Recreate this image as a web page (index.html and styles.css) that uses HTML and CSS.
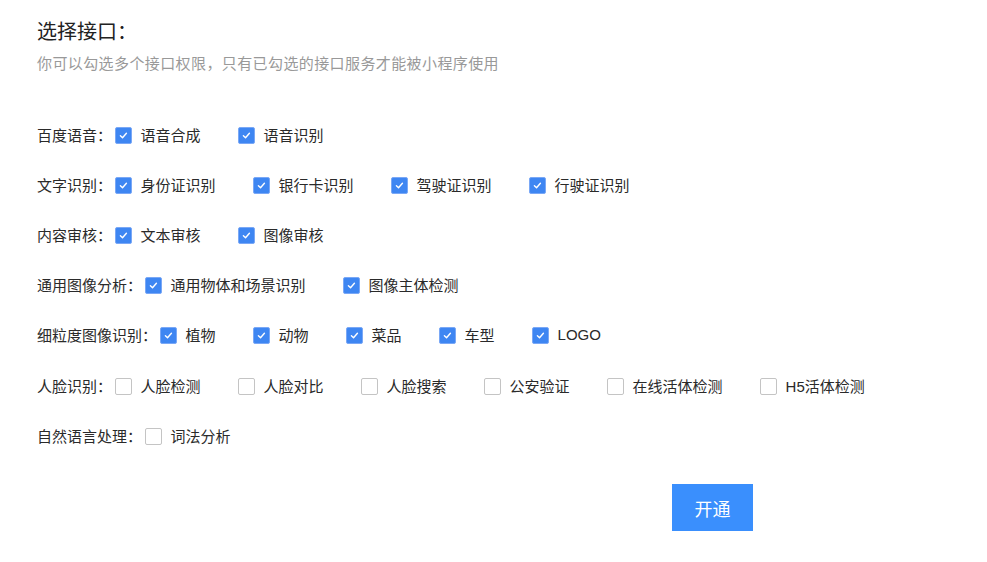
FILE: index.html
```html
<!DOCTYPE html>
<html lang="zh-CN">
<head>
<meta charset="utf-8">
<title>选择接口</title>
<link rel="stylesheet" href="styles.css">
</head>
<body>
<div class="page">
  <h1 class="title">选择接口：</h1>
  <p class="subtitle">你可以勾选多个接口权限，只有已勾选的接口服务才能被小程序使用</p>

  <div class="rows">
    <div class="row">
      <span class="label">百度语音：</span>
      <label class="opt"><span class="box on"><svg viewBox="0 0 17 17"><path d="M5 8.8 L7.4 11 L11.8 6"/></svg></span><span>语音合成</span></label>
      <label class="opt"><span class="box on"><svg viewBox="0 0 17 17"><path d="M5 8.8 L7.4 11 L11.8 6"/></svg></span><span>语音识别</span></label>
    </div>
    <div class="row">
      <span class="label">文字识别：</span>
      <label class="opt"><span class="box on"><svg viewBox="0 0 17 17"><path d="M5 8.8 L7.4 11 L11.8 6"/></svg></span><span>身份证识别</span></label>
      <label class="opt"><span class="box on"><svg viewBox="0 0 17 17"><path d="M5 8.8 L7.4 11 L11.8 6"/></svg></span><span>银行卡识别</span></label>
      <label class="opt"><span class="box on"><svg viewBox="0 0 17 17"><path d="M5 8.8 L7.4 11 L11.8 6"/></svg></span><span>驾驶证识别</span></label>
      <label class="opt"><span class="box on"><svg viewBox="0 0 17 17"><path d="M5 8.8 L7.4 11 L11.8 6"/></svg></span><span>行驶证识别</span></label>
    </div>
    <div class="row">
      <span class="label">内容审核：</span>
      <label class="opt"><span class="box on"><svg viewBox="0 0 17 17"><path d="M5 8.8 L7.4 11 L11.8 6"/></svg></span><span>文本审核</span></label>
      <label class="opt"><span class="box on"><svg viewBox="0 0 17 17"><path d="M5 8.8 L7.4 11 L11.8 6"/></svg></span><span>图像审核</span></label>
    </div>
    <div class="row">
      <span class="label">通用图像分析：</span>
      <label class="opt"><span class="box on"><svg viewBox="0 0 17 17"><path d="M5 8.8 L7.4 11 L11.8 6"/></svg></span><span>通用物体和场景识别</span></label>
      <label class="opt"><span class="box on"><svg viewBox="0 0 17 17"><path d="M5 8.8 L7.4 11 L11.8 6"/></svg></span><span>图像主体检测</span></label>
    </div>
    <div class="row">
      <span class="label">细粒度图像识别：</span>
      <label class="opt"><span class="box on"><svg viewBox="0 0 17 17"><path d="M5 8.8 L7.4 11 L11.8 6"/></svg></span><span>植物</span></label>
      <label class="opt"><span class="box on"><svg viewBox="0 0 17 17"><path d="M5 8.8 L7.4 11 L11.8 6"/></svg></span><span>动物</span></label>
      <label class="opt"><span class="box on"><svg viewBox="0 0 17 17"><path d="M5 8.8 L7.4 11 L11.8 6"/></svg></span><span>菜品</span></label>
      <label class="opt"><span class="box on"><svg viewBox="0 0 17 17"><path d="M5 8.8 L7.4 11 L11.8 6"/></svg></span><span>车型</span></label>
      <label class="opt"><span class="box on"><svg viewBox="0 0 17 17"><path d="M5 8.8 L7.4 11 L11.8 6"/></svg></span><span>LOGO</span></label>
    </div>
    <div class="row">
      <span class="label">人脸识别：</span>
      <label class="opt"><span class="box"></span><span>人脸检测</span></label>
      <label class="opt"><span class="box"></span><span>人脸对比</span></label>
      <label class="opt"><span class="box"></span><span>人脸搜索</span></label>
      <label class="opt"><span class="box"></span><span>公安验证</span></label>
      <label class="opt"><span class="box"></span><span>在线活体检测</span></label>
      <label class="opt"><span class="box"></span><span>H5活体检测</span></label>
    </div>
    <div class="row">
      <span class="label">自然语言处理：</span>
      <label class="opt"><span class="box"></span><span>词法分析</span></label>
    </div>
  </div>

  <button class="submit" type="button">开通</button>
</div>
</body>
</html>
```

FILE: styles.css
```css
* { box-sizing: border-box; }

body {
  margin: 0;
  background: #fff;
  font-family: "Liberation Sans", "Noto Sans CJK SC", sans-serif;
  color: #333;
}

.page {
  padding: 18px 37px 0;
}

.title {
  margin: 0;
  font-size: 20px;
  line-height: 28px;
  font-weight: normal;
  color: #222;
}

.subtitle {
  margin: 8px 0 0;
  font-size: 15px;
  line-height: 20px;
  letter-spacing: 0.4px;
  color: #999;
}

.rows {
  margin-top: 35px;
  display: flex;
  flex-direction: column;
}

.row {
  height: 50.2px;
  display: flex;
  align-items: center;
  font-size: 15px;
  color: #2a2a2a;
}

.label {
  margin-right: 2.5px;
}

.opt {
  display: flex;
  align-items: center;
  gap: 9px;
  margin-right: 37px;
  cursor: pointer;
}

.box {
  width: 17px;
  height: 17px;
  margin-top: 2px;
  border: 1px solid #c4c4c4;
  border-radius: 2px;
  background: #fff;
  display: flex;
  align-items: center;
  justify-content: center;
}

.box.on {
  background: #3e86f2;
  border-color: #7aa8f6;
}

.box svg {
  width: 15px;
  height: 15px;
  fill: none;
  stroke: #fff;
  stroke-width: 1.6;
  stroke-linecap: round;
  stroke-linejoin: round;
}

.submit {
  display: block;
  margin: 24px 0 0 635px;
  width: 81px;
  height: 47px;
  border: 0;
  border-radius: 0;
  background: #3a8ffd;
  color: #fff;
  font-family: "Noto Sans CJK SC", sans-serif;
  font-size: 18px;
  cursor: pointer;
}
```
